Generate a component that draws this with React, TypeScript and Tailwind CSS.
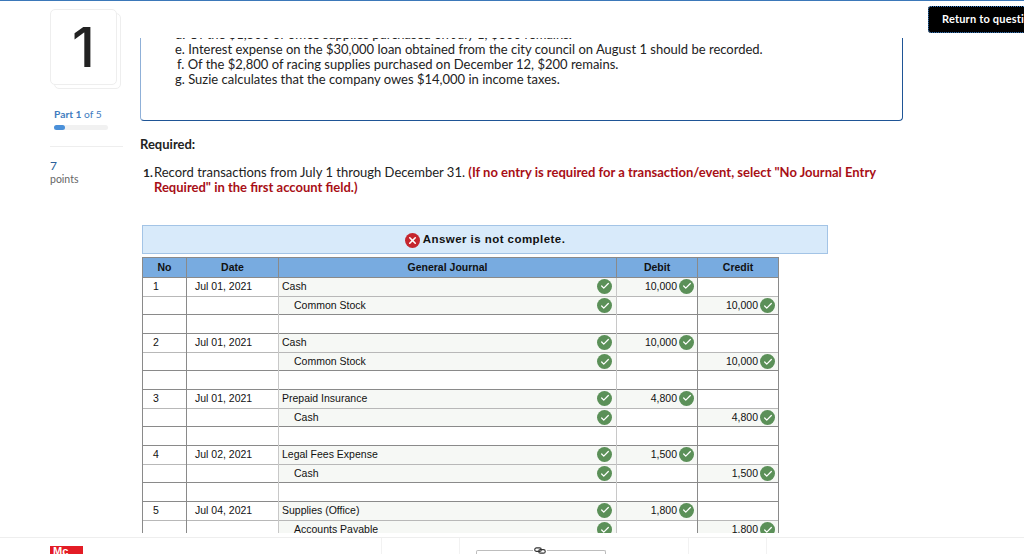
import { Check, X } from "lucide-react";

type Entry = { no: number; date: string; debit: string; credit: string; amount: string };

const entries: Entry[] = [
  { no: 1, date: "Jul 01, 2021", debit: "Cash", credit: "Common Stock", amount: "10,000" },
  { no: 2, date: "Jul 01, 2021", debit: "Cash", credit: "Common Stock", amount: "10,000" },
  { no: 3, date: "Jul 01, 2021", debit: "Prepaid Insurance", credit: "Cash", amount: "4,800" },
  { no: 4, date: "Jul 02, 2021", debit: "Legal Fees Expense", credit: "Cash", amount: "1,500" },
  { no: 5, date: "Jul 04, 2021", debit: "Supplies (Office)", credit: "Accounts Payable", amount: "1,800" },
];

const ui = "font-['Lato','Open_Sans',sans-serif]";
const cellLeft = "border-l border-l-[#8a8a8a]";

function Tick() {
  return (
    <span className="inline-flex h-[15px] w-[15px] shrink-0 items-center justify-center rounded-full bg-[#5b9058]">
      <Check className="h-[10px] w-[10px] text-white" strokeWidth={3} />
    </span>
  );
}

function Amount({ value }: { value: string }) {
  return (
    <div className="flex items-center justify-end gap-[2px] pr-[3px]">
      <span>{value}</span>
      <Tick />
    </div>
  );
}

function EntryRows({ entry }: { entry: Entry }) {
  return (
    <>
      <tr className="h-[19px] border-t border-t-[#8a8a8a]">
        <td className={`pb-[2px] pl-[10px] ${cellLeft}`}>{entry.no}</td>
        <td className={`pb-[2px] pl-[8px] ${cellLeft}`}>{entry.date}</td>
        <td className="border-l border-l-[#c8c8c8] bg-[#f6f8f5] pb-[2px] pl-[3px] pr-[4px]">
          <div className="flex items-center justify-between">
            <span>{entry.debit}</span>
            <Tick />
          </div>
        </td>
        <td className="border-l border-l-[#c8c8c8] bg-[#f6f8f5] pb-[2px]">
          <Amount value={entry.amount} />
        </td>
        <td className={`border-r border-r-[#8a8a8a] ${cellLeft}`} />
      </tr>
      <tr className="h-[18px] border-t border-t-[#b8b8b8]">
        <td className={cellLeft} />
        <td className={cellLeft} />
        <td className="border-l border-l-[#c8c8c8] bg-[#f6f8f5] pl-[15px] pr-[4px]">
          <div className="flex items-center justify-between">
            <span>{entry.credit}</span>
            <Tick />
          </div>
        </td>
        <td className="border-l border-l-[#c8c8c8]" />
        <td className={`border-r border-r-[#8a8a8a] bg-[#f6f8f5] ${cellLeft}`}>
          <Amount value={entry.amount} />
        </td>
      </tr>
      <tr className="h-[19px] border-t border-t-[#8a8a8a]">
        <td className={cellLeft} />
        <td className={cellLeft} />
        <td className="border-l border-l-[#c8c8c8]" />
        <td className="border-l border-l-[#c8c8c8]" />
        <td className={`border-r border-r-[#8a8a8a] ${cellLeft}`} />
      </tr>
    </>
  );
}

function JournalTable() {
  return (
    <table className="w-[636px] table-fixed border-collapse font-['Liberation_Sans',Arial,sans-serif] text-[10.5px] leading-none text-[#111]">
      <colgroup>
        <col className="w-[44px]" />
        <col className="w-[92px]" />
        <col className="w-[338px]" />
        <col className="w-[81px]" />
        <col className="w-[81px]" />
      </colgroup>
      <thead>
        <tr className="h-[20px] border border-[#8a8a8a] bg-[#78abe0] font-bold">
          <th className="border-r border-r-[#8a8a8a]">No</th>
          <th className="border-r border-r-[#8a8a8a]">Date</th>
          <th className="border-r border-r-[#8a8a8a]">General Journal</th>
          <th className="border-r border-r-[#8a8a8a]">Debit</th>
          <th>Credit</th>
        </tr>
      </thead>
      <tbody>
        {entries.map((entry) => (
          <EntryRows key={entry.no} entry={entry} />
        ))}
      </tbody>
    </table>
  );
}

function Sidebar() {
  return (
    <aside className={`w-[140px] shrink-0 pl-[50px] pt-[8px] ${ui}`}>
      <div className="relative h-[76px] w-[67px]">
        <div className="absolute left-[4px] top-[4px] h-[76px] w-[67px] rounded-[5px] border border-[#eeeeee] bg-white" />
        <div className="absolute inset-0 flex items-center justify-center rounded-[5px] border border-[#eeeeee] bg-white font-['Inter',sans-serif] text-[55px] font-medium leading-none text-[#222]">
          1
        </div>
      </div>
      <div className="mt-[22px] pl-[4px] text-[10.25px] leading-[14px] text-[#3f7cc0]">
        <span className="font-bold">Part 1</span> of 5
      </div>
      <div className="ml-[4px] mt-[4px] h-[5px] w-[54px] rounded-full bg-[#f1f1f1]">
        <div className="h-full w-[11px] rounded-full bg-[#4a90d9]" />
      </div>
      <div className="mt-[16px] h-px w-[73px] bg-[#eeeeee]" />
      <div className="mt-[12px] text-[12px] leading-[14px] text-[#2b5f9a]">7</div>
      <div className="text-[10.5px] leading-[13px] text-[#666]">points</div>
    </aside>
  );
}

export default function App() {
  return (
    <div className="relative flex h-[554px] w-[1024px] flex-col overflow-hidden border-t border-t-[#3b78b9] bg-white">
      <div className="flex h-[536px] shrink-0">
        <Sidebar />
        <main className={`mt-[37px] h-[495px] w-[884px] overflow-hidden ${ui}`}>
          <div className="flow-root h-[83px] w-[763px] rounded-b-[4px] border-x border-b border-l-[#8fb0d8] border-r-[#1f5596] border-b-[#1f5596] pl-[34px] text-[13px] leading-[15px] text-[#222]">
            <p className="-mt-[11px]">d. Of the $1,500 of office supplies purchased on July 1, $300 remains.</p>
            <p>e. Interest expense on the $30,000 loan obtained from the city council on August 1 should be recorded.</p>
            <p className="pl-[2px]">f. Of the $2,800 of racing supplies purchased on December 12, $200 remains.</p>
            <p>g. Suzie calculates that the company owes $14,000 in income taxes.</p>
          </div>
          <p className="mt-[16px] text-[13px] font-bold leading-[15px] text-[#222]">Required:</p>
          <div className="mt-[13px] flex text-[13px] leading-[15px] text-[#222]">
            <span className="w-[14px] shrink-0 pl-[3px] text-[12px] font-bold">1.</span>
            <p className="w-[740px]">
              Record transactions from July 1 through December 31.{" "}
              <strong className="text-[#a80f16]">
                (If no entry is required for a transaction/event, select "No Journal Entry Required" in the first account field.)
              </strong>
            </p>
          </div>
          <div className="ml-[2px] mt-[30px] flex h-[29px] w-[686px] items-center justify-center gap-[3px] border border-[#a3c4e6] bg-[#d8eafa] pt-[1px] font-['Liberation_Sans',Arial,sans-serif] text-[11.5px] font-bold tracking-[0.45px] text-[#111]">
            <span className="flex h-[15px] w-[15px] items-center justify-center rounded-full bg-[#c5262e]">
              <X className="h-[11px] w-[11px] text-white" strokeWidth={3.5} />
            </span>
            Answer is not complete.
          </div>
          <div className="ml-[2px] mt-[3px]">
            <JournalTable />
          </div>
        </main>
      </div>
      <footer className="relative flex h-[17px] shrink-0 border-t border-t-[#eeeeee] pl-[50px]">
        <div className="mt-[8px] h-[9px] w-[33px] overflow-hidden bg-[#e31c25] pl-[3px] font-['Liberation_Sans',Arial,sans-serif] text-[11px] font-bold leading-[11px] text-white">
          Mc
        </div>
        <div className="ml-[298px] h-full w-[78px] border-l border-l-[#f2f2f2]" />
        <div className="h-full w-[229px] border-l border-l-[#f2f2f2] pl-[16px] pt-[12px]">
          <div className="relative h-[8px] w-[130px] rounded-t-[2px] border-x border-t border-[#bdbdbd]">
            <svg viewBox="0 0 14 8" className="absolute left-[56px] top-[-4px] h-[7px] w-[14px] bg-white" fill="none" stroke="#333" strokeWidth="1.3">
              <rect x="1" y="1" width="7.5" height="4" rx="2" />
              <rect x="5.5" y="3" width="7.5" height="4" rx="2" />
            </svg>
          </div>
        </div>
        <div className="h-full w-[79px] border-x border-x-[#f2f2f2]" />
      </footer>
      <button className={`absolute left-[928px] top-[5px] h-[27px] w-[120px] whitespace-nowrap rounded-[3px] border border-dotted border-[#3b82d0] bg-black pl-[13px] text-left ${ui} text-[11px] font-bold tracking-[0.2px] text-white`}>
        Return to question
      </button>
    </div>
  );
}
